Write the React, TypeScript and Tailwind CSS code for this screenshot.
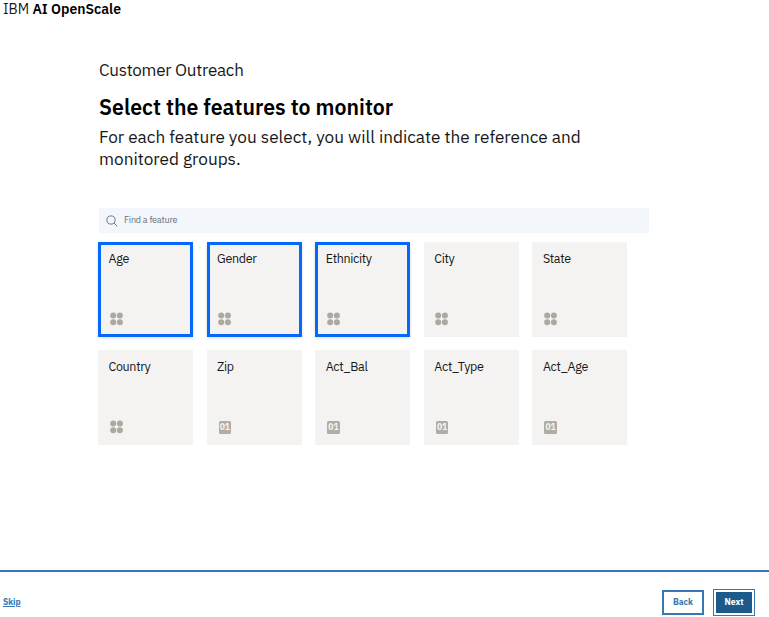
type Feature = { name: string; kind: 'category' | 'number'; selected?: boolean };

const features: Feature[] = [
  { name: 'Age', kind: 'category', selected: true },
  { name: 'Gender', kind: 'category', selected: true },
  { name: 'Ethnicity', kind: 'category', selected: true },
  { name: 'City', kind: 'category' },
  { name: 'State', kind: 'category' },
  { name: 'Country', kind: 'category' },
  { name: 'Zip', kind: 'number' },
  { name: 'Act_Bal', kind: 'number' },
  { name: 'Act_Type', kind: 'number' },
  { name: 'Act_Age', kind: 'number' },
];

function CategoryIcon() {
  return (
    <svg width="14" height="14" viewBox="0 0 14 14" fill="#ada8a0">
      <circle cx="3.2" cy="3.5" r="3" />
      <circle cx="9.9" cy="3.5" r="3" />
      <circle cx="3.2" cy="10.2" r="3" />
      <circle cx="9.9" cy="10.2" r="3" />
    </svg>
  );
}

function NumberIcon() {
  return (
    <span className="ml-[0.5px] flex h-[12.5px] w-[12.5px] items-center justify-center rounded-[1.5px] bg-[#b0ada5] text-[8.5px] leading-none font-bold text-[#f4f3f1]">
      01
    </span>
  );
}

function FeatureCard({ feature }: { feature: Feature }) {
  return (
    <button
      className={`flex h-[95px] w-[95px] flex-col items-start justify-between border-[3px] pt-[5px] pr-0 pb-[8px] pl-[7.5px] ${
        feature.selected
          ? 'border-[#0568fc] bg-[#f4f3f1] shadow-[0_1px_3px_rgba(0,0,0,0.15)]'
          : 'border-[#f4f3f1] bg-[#f4f3f1]'
      }`}
    >
      <span className="text-[12.5px] leading-[16px] tracking-[-0.33px] whitespace-nowrap text-[#171717]">
        {feature.name}
      </span>
      <span className="flex h-[14px] items-center pl-px">
        {feature.kind === 'category' ? <CategoryIcon /> : <NumberIcon />}
      </span>
    </button>
  );
}

export default function App() {
  return (
    <div className="flex h-[617px] w-[769px] flex-col overflow-hidden bg-white font-['IBM_Plex_Sans',Roboto,sans-serif] text-[#171717]">
      <header className="h-[59px] pl-[3px] text-[14px] leading-[19px] whitespace-nowrap">
        IBM <span className="font-semibold text-black">AI OpenScale</span>
      </header>
      <main className="flex h-[511px] flex-col pl-[98px]">
        <p className="pl-px text-[17px] leading-[22px] tracking-[-0.24px]">Customer Outreach</p>
        <h1 className="mt-[11px] pl-px text-[21.3px] leading-[30px] font-semibold text-black">
          Select the features to monitor
        </h1>
        <p className="mt-[4px] pl-px text-[17.2px] leading-[22px] whitespace-nowrap">
          For each feature you select, you will indicate the reference and
          <br />
          monitored groups.
        </p>
        <div className="mt-[38px] ml-px flex items-end">
          <div className="flex h-[25px] w-[550px] items-center bg-[#f3f7fc] pl-[7px]">
            <svg width="12" height="12" viewBox="0 0 12 12" fill="none" stroke="#6d7f89" strokeWidth="1">
              <circle cx="5" cy="5" r="4.1" />
              <path d="M8 8l3.2 3.2" />
            </svg>
            <span className="ml-[6px] pb-px text-[9px] leading-[12px] tracking-[-0.18px] text-[#65717a]">
              Find a feature
            </span>
          </div>
          <span className="ml-[3px] h-[8px] w-px bg-[#f7fafd]" />
        </div>
        <div className="mt-[9px] grid grid-cols-[repeat(5,95px)] gap-x-[13.6px] gap-y-[13.4px]">
          {features.map((feature) => (
            <FeatureCard key={feature.name} feature={feature} />
          ))}
        </div>
      </main>
      <footer className="flex h-[47px] items-start border-t-2 border-[#3578b3] pr-[14px] pl-[3px]">
        <a className="mt-[24px] text-[8.4px] leading-[12px] font-bold text-[#3578b3] underline">Skip</a>
        <button className="mt-[18px] ml-auto h-[25px] w-[42px] border-2 border-[#3578b3] bg-white text-[8.6px] font-bold text-[#3578b3]">
          Back
        </button>
        <button className="mt-[17px] ml-[9px] h-[27px] w-[42px] border border-[#3578b3] bg-white p-[2px]">
          <span className="flex h-full w-full items-center justify-center bg-[#1d5a8c] text-[8.6px] font-bold text-white">
            Next
          </span>
        </button>
      </footer>
    </div>
  );
}
